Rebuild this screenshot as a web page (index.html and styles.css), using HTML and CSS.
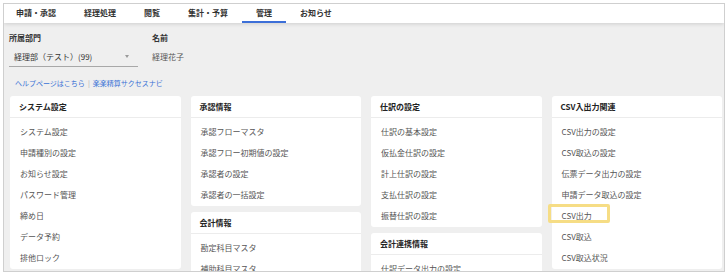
FILE: index.html
```html
<!DOCTYPE html>
<html lang="ja">

<head>
  <meta charset="UTF-8">
  <meta name="viewport" content="width=device-width, initial-scale=1.0">
  <title>管理</title>
  <link rel="stylesheet" href="styles.css">
</head>

<body>
  <div class="frame">
    <nav class="tabs">
      <a class="tab">申請・承認</a>
      <a class="tab">経理処理</a>
      <a class="tab">閲覧</a>
      <a class="tab">集計・予算</a>
      <a class="tab active">管理</a>
      <a class="tab">お知らせ</a>
    </nav>

    <div class="content">
      <div class="fields">
        <div class="field dept">
          <div class="field-label">所属部門</div>
          <div class="select">
            <span>経理部（テスト）(99)</span>
            <span class="caret"></span>
          </div>
        </div>
        <div class="field">
          <div class="field-label">名前</div>
          <div class="value">経理花子</div>
        </div>
      </div>

      <div class="links">
        <a>ヘルプページはこちら</a><span class="sep">|</span><a>楽楽精算サクセスナビ</a>
      </div>

      <div class="menu-grid">
        <div class="column">
          <div class="card">
            <div class="card-title">システム設定</div>
            <ul class="card-list">
              <li>システム設定</li>
              <li>申請種別の設定</li>
              <li>お知らせ設定</li>
              <li>パスワード管理</li>
              <li>締め日</li>
              <li>データ予約</li>
              <li>排他ロック</li>
            </ul>
          </div>
        </div>

        <div class="column">
          <div class="card">
            <div class="card-title">承認情報</div>
            <ul class="card-list">
              <li>承認フローマスタ</li>
              <li>承認フロー初期値の設定</li>
              <li>承認者の設定</li>
              <li>承認者の一括設定</li>
            </ul>
          </div>
          <div class="card">
            <div class="card-title">会計情報</div>
            <ul class="card-list">
              <li>勘定科目マスタ</li>
              <li>補助科目マスタ</li>
            </ul>
          </div>
        </div>

        <div class="column">
          <div class="card">
            <div class="card-title">仕訳の設定</div>
            <ul class="card-list">
              <li>仕訳の基本設定</li>
              <li>仮払金仕訳の設定</li>
              <li>計上仕訳の設定</li>
              <li>支払仕訳の設定</li>
              <li>振替仕訳の設定</li>
            </ul>
          </div>
          <div class="card">
            <div class="card-title">会計連携情報</div>
            <ul class="card-list">
              <li>仕訳データ出力の設定</li>
            </ul>
          </div>
        </div>

        <div class="column">
          <div class="card">
            <div class="card-title">CSV入出力関連</div>
            <ul class="card-list">
              <li>CSV出力の設定</li>
              <li>CSV取込の設定</li>
              <li>伝票データ出力の設定</li>
              <li>申請データ取込の設定</li>
              <li class="marked">CSV出力<span class="highlight"></span></li>
              <li>CSV取込</li>
              <li>CSV取込状況</li>
            </ul>
          </div>
        </div>
      </div>
    </div>
  </div>
</body>

</html>
```

FILE: styles.css
```css
body {
  margin: 3px;
  background: #ffffff;
  font-family: "Noto Sans CJK JP", "Noto Sans", sans-serif;
  font-size: 8px;
  color: #333;
}

.frame {
  height: 267px;
  border: 1px solid #cfcfcf;
  background: #efefef;
  overflow: hidden;
}

.tabs {
  display: flex;
  height: 19px;
  padding-left: 0;
  background: #ffffff;
  box-shadow: 0 1px 4px rgba(0, 0, 0, 0.14);
  position: relative;
}

.tab {
  padding: 0 14px;
  line-height: 17px;
  font-weight: bold;
  color: #333;
  border-bottom: 2px solid transparent;
}

.tab:first-child {
  padding-left: 12px;
}

.tab.active {
  border-bottom-color: #3c6fd8;
}

.content {
  padding: 9px 2px 0 5px;
}

.fields {
  display: flex;
  gap: 14px;
}

.field-label {
  font-weight: bold;
  line-height: 12px;
  color: #333;
  margin-bottom: 3px;
}

.dept {
  width: 129px;
}

.select {
  display: flex;
  justify-content: space-between;
  align-items: center;
  height: 19px;
  padding: 0 9px 0 5px;
  border-bottom: 1px solid #a8a8a8;
  color: #333;
}

.caret {
  width: 0;
  height: 0;
  border-left: 2.5px solid transparent;
  border-right: 2.5px solid transparent;
  border-top: 3px solid #9a9a9a;
}

.value {
  line-height: 19px;
  color: #555;
}

.links {
  margin-top: 11px;
  padding-left: 6px;
  font-size: 7px;
  line-height: 11px;
  color: #3a72d6;
}

.links .sep {
  margin: 0 3px;
  color: #aaa;
}

.menu-grid {
  display: grid;
  grid-template-columns: repeat(4, 1fr);
  gap: 10px;
  margin-top: 7px;
  margin-left: 1px;
}

.column {
  display: flex;
  flex-direction: column;
  gap: 6px;
}

.card {
  background: #ffffff;
  border-radius: 3px;
}

.card-title {
  padding: 5px 9px;
  line-height: 11px;
  font-weight: bold;
  color: #222;
  border-bottom: 1px solid #ececec;
}

.card-list {
  list-style: none;
  margin: 0;
  padding: 3px 0 1px;
}

.card-list li {
  position: relative;
  padding: 0 10px;
  line-height: 21px;
  color: #555;
}

.highlight {
  position: absolute;
  left: -4px;
  top: -1px;
  width: 56px;
  height: 13px;
  border: 3px solid #f6dd85;
  border-radius: 2px;
}
```
